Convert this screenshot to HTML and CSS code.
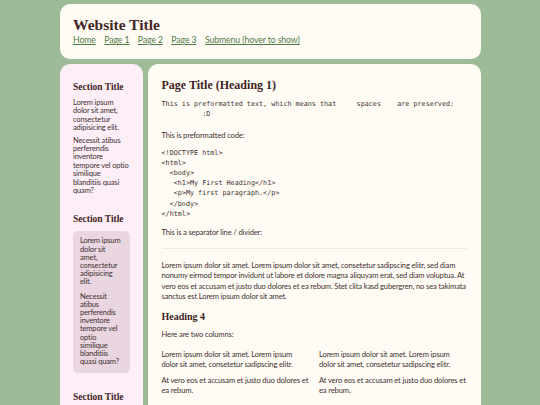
FILE: index.html
```html
<!DOCTYPE html>
<html lang="en">
<head>
<meta charset="utf-8">
<title>Website Title</title>
<link rel="stylesheet" href="styles.css">
</head>
<body>
<div class="page">
  <header class="site-header">
    <h1 class="site-title">Website Title</h1>
    <nav class="nav">
      <a href="#">Home</a>
      <a href="#">Page 1</a>
      <a href="#">Page 2</a>
      <a href="#">Page 3</a>
      <a href="#">Submenu (hover to show)</a>
    </nav>
  </header>
  <div class="layout">
    <aside class="sidebar">
      <h3 class="side-title">Section Title</h3>
      <p>Lorem ipsum dolor sit amet, consectetur adipisicing elit.</p>
      <p>Necessit atibus perferendis inventore tempore vel optio similique blanditiis quasi quam?</p>
      <h3 class="side-title">Section Title</h3>
      <div class="side-box">
        <p>Lorem ipsum dolor sit amet, consectetur adipisicing elit.</p>
        <p>Necessit atibus perferendis inventore tempore vel optio similique blanditiis quasi quam?</p>
      </div>
      <h3 class="side-title">Section Title</h3>
    </aside>
    <main class="main">
      <h1 class="page-title">Page Title (Heading 1)</h1>
      <pre class="pre-text">This is preformatted text, which means that     spaces    are preserved:
          :D</pre>
      <p class="intro">This is preformatted code:</p>
      <pre class="code">&lt;!DOCTYPE html&gt;
&lt;html&gt;
  &lt;body&gt;
   &lt;h1&gt;My First Heading&lt;/h1&gt;
   &lt;p&gt;My first paragraph.&lt;/p&gt;
  &lt;/body&gt;
&lt;/html&gt;</pre>
      <p class="intro sep-label">This is a separator line / divider:</p>
      <hr class="divider">
      <p class="para">Lorem ipsum dolor sit amet. Lorem ipsum dolor sit amet, consetetur sadipscing elitr, sed diam nonumy eirmod tempor invidunt ut labore et dolore magna aliquyam erat, sed diam voluptua. At vero eos et accusam et justo duo dolores et ea rebum. Stet clita kasd gubergren, no sea takimata sanctus est Lorem ipsum dolor sit amet.</p>
      <h4 class="h4">Heading 4</h4>
      <p class="cols-label">Here are two columns:</p>
      <div class="columns">
        <div class="col">
          <p>Lorem ipsum dolor sit amet. Lorem ipsum dolor sit amet, consetetur sadipscing elitr.</p>
          <p>At vero eos et accusam et justo duo dolores et ea rebum.</p>
        </div>
        <div class="col">
          <p>Lorem ipsum dolor sit amet. Lorem ipsum dolor sit amet, consetetur sadipscing elitr.</p>
          <p>At vero eos et accusam et justo duo dolores et ea rebum.</p>
        </div>
      </div>
    </main>
  </div>
</div>
</body>
</html>
```
FILE: styles.css
```css
html, body {
  margin: 0;
  padding: 0;
}
body {
  background: #9ebb98;
  font-family: Lato, "Open Sans", sans-serif;
  color: #3f3030;
  font-size: 7.6px;
  letter-spacing: -0.15px;
  height: 405px;
  overflow: hidden;
}
.page {
  width: 421px;
  margin: 0 auto;
  padding-top: 4px;
}
.site-header {
  background: #fffcf6;
  border-radius: 10px;
  padding: 13px 14px 14px 13.5px;
}
.site-title {
  margin: 0;
  font-family: "Liberation Serif", serif;
  font-weight: bold;
  font-size: 15.5px;
  line-height: 16px;
  letter-spacing: 0;
  color: #452626;
}
.nav {
  display: flex;
  gap: 8.4px;
  margin-top: 1px;
  line-height: 11px;
  font-size: 8.75px;
  letter-spacing: -0.12px;
}
.nav a {
  color: #4f7a45;
  text-decoration: underline;
}
.layout {
  display: grid;
  grid-template-columns: 83px 1fr;
  gap: 5px;
  margin-top: 5px;
}
.sidebar {
  background: #fdeef8;
  border-radius: 10px 10px 0 0;
  padding: 18px 12.5px 0 13.5px;
  height: 400px;
}
.side-title {
  margin: 19px 0 7px;
  font-family: "Liberation Serif", serif;
  font-weight: bold;
  font-size: 9.5px;
  line-height: 10px;
  letter-spacing: 0;
  color: #3f2525;
}
.sidebar > .side-title:first-child {
  margin-top: 0;
}
.sidebar p {
  margin: 0 0 4px;
  line-height: 8.4px;
  font-size: 7.5px;
}
.side-box {
  background: #e9d6e0;
  border-radius: 5px;
  padding: 6px 6px 7px 7px;
}
.side-box p {
  line-height: 8.1px;
  margin-bottom: 7px;
}
.side-box p:last-child {
  margin-bottom: 0;
}
.main {
  background: #fffcf6;
  border-radius: 10px 10px 0 0;
  padding: 14px 14px 0 14px;
  height: 400px;
}
.page-title {
  margin: 0 0 7px;
  font-family: "Liberation Serif", serif;
  font-weight: bold;
  font-size: 12px;
  line-height: 14px;
  letter-spacing: 0;
  color: #3f2323;
}
pre {
  font-family: "DejaVu Sans Mono", monospace;
  font-size: 6.75px;
  line-height: 10.2px;
  letter-spacing: 0;
  margin: 0;
  color: #3f3030;
}
.pre-text {
  margin-bottom: 11px;
}
.intro {
  margin: 0 0 7px;
  line-height: 10.2px;
}
.code {
  margin-bottom: 8px;
}
.sep-label {
  margin-bottom: 11px;
}
.divider {
  border: 0;
  border-top: 1px solid #e6efdc;
  margin: 0 0 11px;
}
.para {
  margin: 0 0 10px;
  line-height: 10.2px;
}
.h4 {
  margin: 0 0 6px;
  font-family: "Liberation Serif", serif;
  font-weight: bold;
  font-size: 10px;
  line-height: 12px;
  letter-spacing: 0;
  color: #3f2323;
}
.cols-label {
  margin: 0 0 10px;
  line-height: 10.2px;
}
.columns {
  display: grid;
  grid-template-columns: 1fr 1fr;
  gap: 10px;
}
.col p {
  margin: 0 0 5px;
  line-height: 10.2px;
}
```
